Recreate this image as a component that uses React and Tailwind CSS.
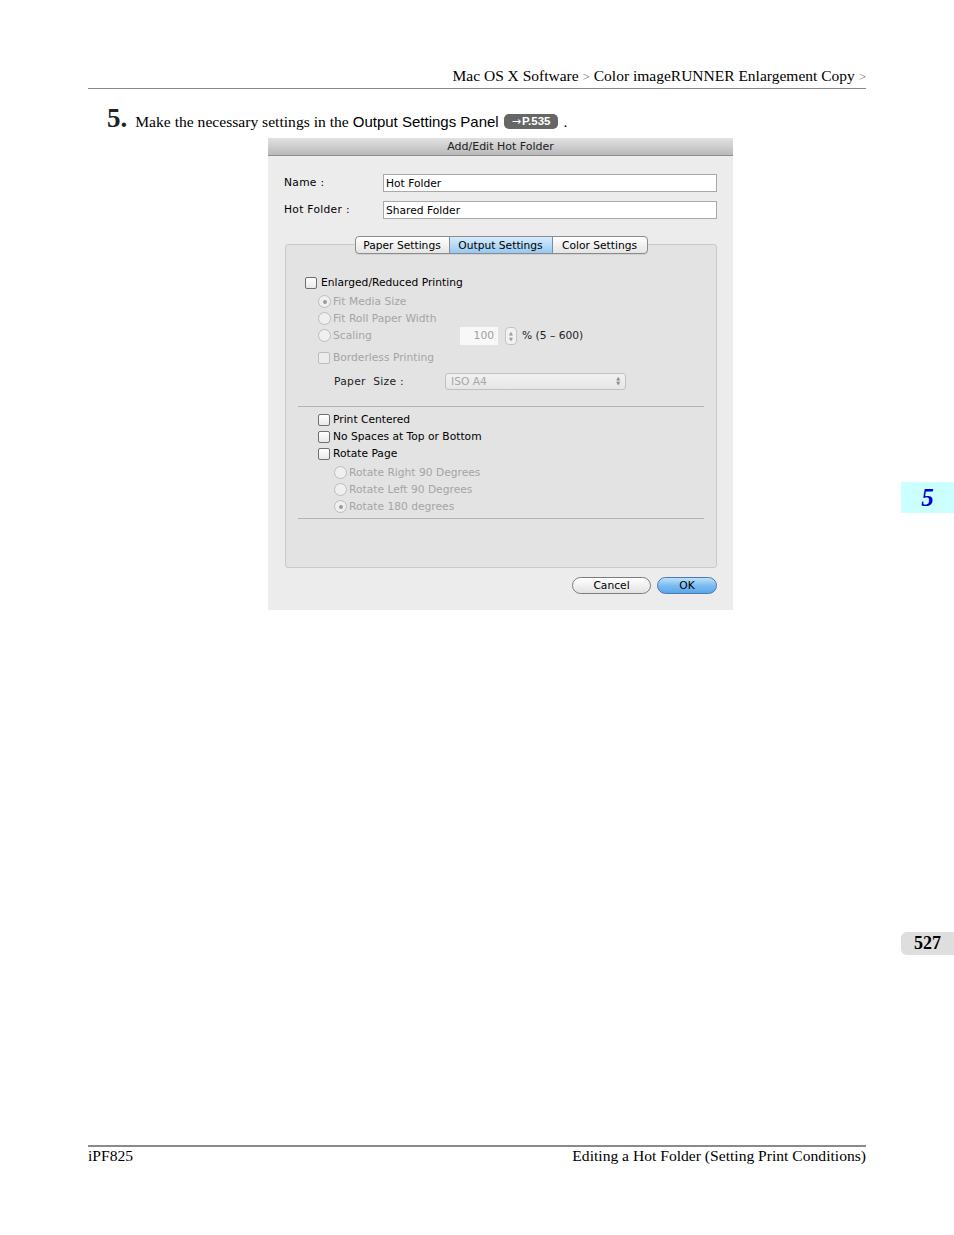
import React from "react";

const dlg = { fontFamily: '"DejaVu Sans", Verdana, sans-serif' };
const serif = { fontFamily: '"Liberation Serif", "Times New Roman", serif' };

function Check({ disabled }) {
  return (
    <span
      className={
        "inline-block w-[12px] h-[12px] rounded-[2px] border shrink-0 " +
        (disabled
          ? "border-[#bdbdbd] bg-[#ececec]"
          : "border-[#6f6f6f] bg-gradient-to-b from-white to-[#e9e9e9]")
      }
    />
  );
}

function Radio({ on }) {
  return (
    <span className="inline-flex items-center justify-center w-[13px] h-[13px] rounded-full border border-[#bdbdbd] bg-[#efefef] shrink-0">
      {on && <span className="w-[4px] h-[4px] rounded-full bg-[#9a9a9a]" />}
    </span>
  );
}

function Row({ children, className = "" }) {
  return <div className={"flex items-center h-[17px] " + className}>{children}</div>;
}

export default function App() {
  return (
    <div className="relative w-[954px] h-[1235px] bg-white flex flex-col overflow-hidden">
      {/* header */}
      <div
        className="ml-[88px] w-[778px] pt-[67px] pb-[3px] border-b border-[#8a8a8a] text-right text-[15.5px] leading-[17px] text-black"
        style={serif}
      >
        Mac OS X Software <span className="text-[#777] text-[13px]">&gt;</span> Color imageRUNNER Enlargement Copy{" "}
        <span className="text-[#777] text-[13px]">&gt;</span>
      </div>

      {/* step */}
      <div className="ml-[107px] mt-[16px] flex items-baseline leading-[27px]" style={serif}>
        <span className="text-[27px] font-bold text-[#222]">5.</span>
        <span className="ml-[8px] text-[15.6px]">Make the necessary settings in the</span>
        <span className="ml-[4px] text-[15px]" style={{ fontFamily: '"Liberation Sans", Arial, sans-serif' }}>
          Output Settings Panel
        </span>
        <span
          className="ml-[5px] self-center mt-[3px] inline-flex items-center h-[15px] px-[8px] rounded-[5px] bg-[#666] text-white text-[11.5px] font-bold"
          style={{ fontFamily: '"Liberation Sans", Arial, sans-serif' }}
        >
          <span className="text-[11px] font-normal mr-[1px]" style={{ fontFamily: '"DejaVu Sans", sans-serif' }}>
            →
          </span>
          P.535
        </span>
        <span className="ml-[5px] text-[15.6px]">.</span>
      </div>

      {/* dialog */}
      <div className="ml-[268px] mt-[3px] w-[465px] bg-[#ececec] text-[10.7px] text-black" style={dlg}>
        <div className="h-[18px] flex items-center justify-center bg-gradient-to-b from-[#e2e2e2] to-[#b9b9b9] border-b border-[#8d8d8d] text-[#222] text-[11px]">
          <span className="mt-[2px]">Add/Edit Hot Folder</span>
        </div>
        <div className="pl-[16px] pr-[16px] pt-[18px] pb-[16px]">
          <div className="flex items-center h-[18px]">
            <div className="w-[99px] tracking-[0.3px]">Name :</div>
            <div className="flex-1 h-[18px] bg-white border border-[#a9a9a9] flex items-center pl-[2px] pt-[2px]">
              Hot Folder
            </div>
          </div>
          <div className="flex items-center h-[18px] mt-[9px]">
            <div className="w-[99px] tracking-[0.3px]">Hot Folder :</div>
            <div className="flex-1 h-[18px] bg-white border border-[#a9a9a9] flex items-center pl-[2px] pt-[2px]">
              Shared Folder
            </div>
          </div>

          {/* tab box */}
          <div className="mt-[17px] ml-[1px] flex flex-col">
            <div className="relative z-10 flex justify-center">
              <div className="flex h-[18px] rounded-[4px] border border-[#8c8c8c] overflow-hidden bg-gradient-to-b from-white to-[#e4e4e4] shadow-[0_1px_0_rgba(0,0,0,0.08)]">
                <div className="w-[94px] flex items-center justify-center pt-[2px] border-r border-[#8c8c8c]">
                  Paper Settings
                </div>
                <div className="w-[103px] flex items-center justify-center pt-[2px] border-r border-[#6c8fb8] bg-gradient-to-b from-[#d8ecfc] to-[#94c9f3]">
                  Output Settings
                </div>
                <div className="w-[94px] flex items-center justify-center pt-[2px]">Color Settings</div>
              </div>
            </div>
            <div className="-mt-[10px] h-[324px] border border-[#c9c9c9] rounded-[3px] bg-[#e3e3e3] flex flex-col">
              {/* group 1 */}
              <div className="pl-[19px] mt-[29px]">
                <Row>
                  <Check />
                  <span className="ml-[4px] mt-[2px]">Enlarged/Reduced Printing</span>
                </Row>
              </div>
              <div className="pl-[32px] text-[#a5a5a5]">
                <Row className="mt-[2px]">
                  <Radio on />
                  <span className="ml-[2px] mt-[2px]">Fit Media Size</span>
                </Row>
                <Row>
                  <Radio />
                  <span className="ml-[2px] mt-[2px]">Fit Roll Paper Width</span>
                </Row>
                <Row>
                  <Radio />
                  <span className="ml-[2px] mt-[2px] w-[127px]">Scaling</span>
                  <div className="w-[38px] h-[18px] bg-[#f8f8f8] flex items-center justify-end pr-[4px] pt-[2px] text-[#a0a0a0]">
                    100
                  </div>
                  <div className="ml-[7px] w-[12px] h-[18px] rounded-[4px] border border-[#c3c3c3] bg-[#f1f1f1] flex flex-col items-center justify-center text-[5px] leading-[6px] text-[#9a9a9a]">
                    <span>▲</span>
                    <span>▼</span>
                  </div>
                  <span className="ml-[5px] mt-[2px] text-[#222]">% (5 – 600)</span>
                </Row>
                <Row className="mt-[5px]">
                  <Check disabled />
                  <span className="ml-[3px] mt-[2px]">Borderless Printing</span>
                </Row>
                <div className="flex items-center h-[18px] mt-[6px] pl-[16px]">
                  <span className="w-[111px] mt-[2px] text-[#222] tracking-[0.3px]">Paper&nbsp; Size :</span>
                  <div className="w-[181px] h-[17px] rounded-[3px] border border-[#c1c1c1] bg-gradient-to-b from-[#f1f1f1] to-[#e6e6e6] flex items-center pl-[5px] pr-[5px] text-[#a8a8a8]">
                    <span className="flex-1 mt-[2px]">ISO A4</span>
                    <span className="flex flex-col text-[5px] leading-[5px] text-[#8a8a8a]">
                      <span>▲</span>
                      <span>▼</span>
                    </span>
                  </div>
                </div>
              </div>
              <div className="mx-[12px] mt-[16px] h-px bg-[#b3b3b3]" />
              {/* group 2 */}
              <div className="pl-[32px] mt-[4px]">
                <Row>
                  <Check />
                  <span className="ml-[3px] mt-[2px]">Print Centered</span>
                </Row>
                <Row>
                  <Check />
                  <span className="ml-[3px] mt-[2px]">No Spaces at Top or Bottom</span>
                </Row>
                <Row>
                  <Check />
                  <span className="ml-[3px] mt-[2px]">Rotate Page</span>
                </Row>
              </div>
              <div className="pl-[48px] mt-[2px] text-[#a5a5a5]">
                <Row>
                  <Radio />
                  <span className="ml-[2px] mt-[2px]">Rotate Right 90 Degrees</span>
                </Row>
                <Row>
                  <Radio />
                  <span className="ml-[2px] mt-[2px]">Rotate Left 90 Degrees</span>
                </Row>
                <Row>
                  <Radio on />
                  <span className="ml-[2px] mt-[2px]">Rotate 180 degrees</span>
                </Row>
              </div>
              <div className="mx-[12px] mt-[3px] h-px bg-[#b3b3b3]" />
            </div>
          </div>

          {/* buttons */}
          <div className="mt-[9px] flex justify-end gap-[6px]">
            <div className="w-[79px] h-[17px] rounded-full border border-[#7c7c7c] bg-gradient-to-b from-white to-[#e2e2e2] flex items-center justify-center pt-[2px]">
              Cancel
            </div>
            <div className="w-[60px] h-[17px] rounded-full border border-[#4d79b3] bg-gradient-to-b from-[#bfe0fa] via-[#7cbdf0] to-[#5aa6ea] flex items-center justify-center pt-[2px]">
              OK
            </div>
          </div>
        </div>
      </div>

      {/* footer */}
      <div
        className="mt-auto mb-[71px] ml-[88px] w-[778px] border-t-2 border-[#8a8a8a] flex justify-between text-[15.6px] leading-[17px]"
        style={serif}
      >
        <span>iPF825</span>
        <span>Editing a Hot Folder (Setting Print Conditions)</span>
      </div>

      {/* side tabs */}
      <div
        className="absolute left-[901px] top-[482px] w-[53px] h-[31px] bg-[#ccffff] flex items-center justify-center text-[#0000cc] text-[25px] font-bold italic"
        style={serif}
      >
        5
      </div>
      <div
        className="absolute left-[901px] top-[932px] w-[53px] h-[23px] bg-[#dedede] rounded-l-[6px] flex items-center justify-center text-[18px] font-bold text-black"
        style={serif}
      >
        527
      </div>
    </div>
  );
}
